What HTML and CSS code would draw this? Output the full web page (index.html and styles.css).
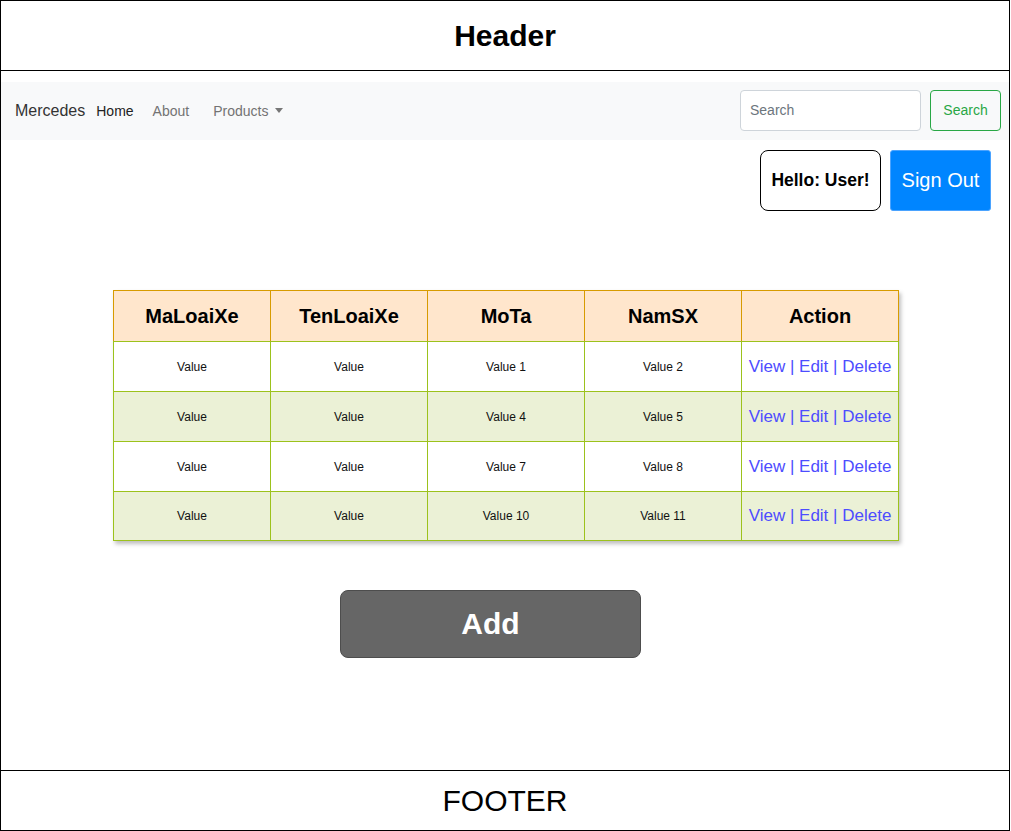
FILE: index.html
```html
<!DOCTYPE html>
<html lang="en">
<head>
<meta charset="utf-8">
<title>Mercedes</title>
<link rel="stylesheet" href="styles.css">
</head>
<body>
<div class="page">
  <header class="page-header">Header</header>
  <main class="page-main">
    <nav class="navbar">
      <span class="brand">Mercedes</span>
      <a class="nav-link active">Home</a>
      <a class="nav-link about">About</a>
      <a class="nav-link products">Products <span class="caret"></span></a>
      <form class="search-form">
        <input class="search-input" type="text" placeholder="Search">
        <button class="search-btn" type="button">Search</button>
      </form>
    </nav>
    <div class="user-row">
      <div class="hello">Hello: User!</div>
      <button class="signout" type="button">Sign Out</button>
    </div>
    <table class="data-table">
      <colgroup>
        <col class="c1"><col class="c2"><col class="c3"><col class="c4"><col class="c5">
      </colgroup>
      <thead>
        <tr><th>MaLoaiXe</th><th>TenLoaiXe</th><th>MoTa</th><th>NamSX</th><th>Action</th></tr>
      </thead>
      <tbody>
        <tr><td>Value</td><td>Value</td><td>Value 1</td><td>Value 2</td><td class="act"><a>View</a> | <a>Edit</a> | <a>Delete</a></td></tr>
        <tr class="alt"><td>Value</td><td>Value</td><td>Value 4</td><td>Value 5</td><td class="act"><a>View</a> | <a>Edit</a> | <a>Delete</a></td></tr>
        <tr><td>Value</td><td>Value</td><td>Value 7</td><td>Value 8</td><td class="act"><a>View</a> | <a>Edit</a> | <a>Delete</a></td></tr>
        <tr class="alt last"><td>Value</td><td>Value</td><td>Value 10</td><td>Value 11</td><td class="act"><a>View</a> | <a>Edit</a> | <a>Delete</a></td></tr>
      </tbody>
    </table>
    <div class="add-row">
      <button class="add-btn" type="button">Add</button>
    </div>
  </main>
  <footer class="page-footer">FOOTER</footer>
</div>
</body>
</html>
```
FILE: styles.css
```css
html, body {
  margin: 0;
  padding: 0;
  background: #ffffff;
}
body {
  font-family: "Liberation Sans", Arial, sans-serif;
  color: #000;
}
.page {
  width: 1010px;
  display: flex;
  flex-direction: column;
}
.page-header {
  box-sizing: border-box;
  height: 71px;
  border: 1px solid #000;
  display: flex;
  align-items: center;
  justify-content: center;
  font-size: 30px;
  font-weight: bold;
  padding-top: 1px;
}
.page-main {
  box-sizing: border-box;
  height: 699px;
  border-left: 1px solid #000;
  border-right: 1px solid #000;
  display: flex;
  flex-direction: column;
}
.page-footer {
  box-sizing: border-box;
  height: 61px;
  border: 1px solid #000;
  display: flex;
  align-items: center;
  justify-content: center;
  font-size: 30px;
}

/* navbar */
.navbar {
  margin-top: 11px;
  height: 58px;
  background: #f8f9fa;
  display: flex;
  align-items: center;
  padding: 0 8px 0 14px;
}
.brand {
  font-size: 16px;
  color: #333;
  margin-right: 11px;
}
.nav-link {
  font-size: 14px;
  color: #737373;
  text-decoration: none;
}
.nav-link.active {
  color: #222;
  margin-right: 19px;
}
.nav-link.about {
  margin-right: 24px;
}
.caret {
  display: inline-block;
  width: 0;
  height: 0;
  border-left: 4.5px solid transparent;
  border-right: 4.5px solid transparent;
  border-top: 5px solid #777;
  vertical-align: 3px;
  margin-left: 3px;
}
.search-form {
  margin-left: auto;
  display: flex;
  align-items: center;
  gap: 9px;
  margin-top: -2px;
}
.search-input {
  box-sizing: border-box;
  width: 181px;
  height: 41px;
  border: 1px solid #ced4da;
  border-radius: 4px;
  padding: 0 9px;
  font-family: "Liberation Sans", Arial, sans-serif;
  font-size: 14px;
  background: #fff;
  outline: none;
}
.search-input::placeholder {
  color: #6c757d;
}
.search-btn {
  box-sizing: border-box;
  width: 71px;
  height: 41px;
  border: 1px solid #28a745;
  border-radius: 4px;
  background: transparent;
  color: #28a745;
  font-family: "Liberation Sans", Arial, sans-serif;
  font-size: 14px;
  padding: 0;
}

/* user row */
.user-row {
  margin-top: 10px;
  display: flex;
  justify-content: flex-end;
  gap: 9px;
  padding-right: 18px;
}
.hello {
  box-sizing: border-box;
  width: 121px;
  height: 61px;
  border: 1px solid #000;
  border-radius: 8px;
  display: flex;
  align-items: center;
  justify-content: center;
  font-size: 17.5px;
  font-weight: bold;
}
.signout {
  box-sizing: border-box;
  width: 101px;
  height: 61px;
  border: 1px solid #4aa3ff;
  border-radius: 3px;
  background: #0085ff;
  color: #fff;
  font-family: "Liberation Sans", Arial, sans-serif;
  font-size: 20px;
  padding: 0;
}

/* table */
.data-table {
  margin: 79px 0 0 112px;
  width: 784px;
  table-layout: fixed;
  border-collapse: collapse;
  box-shadow: 2px 3px 4px rgba(0, 0, 0, 0.25);
}
.c1, .c2, .c3, .c4, .c5 { width: 157px; }
.data-table th {
  height: 50px;
  padding: 0;
  background: #ffe6cc;
  border: 1px solid #d79b00;
  border-bottom-color: #9cc21c;
  font-size: 20px;
  font-weight: bold;
  text-align: center;
  vertical-align: middle;
}
.data-table td {
  height: 49px;
  padding: 0;
  border: 1px solid #9cc21c;
  background: #ffffff;
  font-size: 12px;
  text-align: center;
  vertical-align: middle;
  color: #111;
}
.data-table tr.alt td {
  background: #ebf1d6;
}
.data-table tr.last td {
  height: 48px;
}
.data-table td.act {
  font-size: 17px;
  color: #4d4dff;
}
.data-table td.act a {
  color: #4d4dff;
  text-decoration: none;
}

/* add */
.add-row {
  margin-top: 49px;
  padding-left: 339px;
  display: flex;
}
.add-btn {
  box-sizing: border-box;
  width: 301px;
  height: 68px;
  background: #666666;
  border: 1px solid #4d4d4d;
  border-radius: 8px;
  color: #fff;
  font-family: "Liberation Sans", Arial, sans-serif;
  font-size: 30px;
  font-weight: bold;
  padding: 0;
}
```
